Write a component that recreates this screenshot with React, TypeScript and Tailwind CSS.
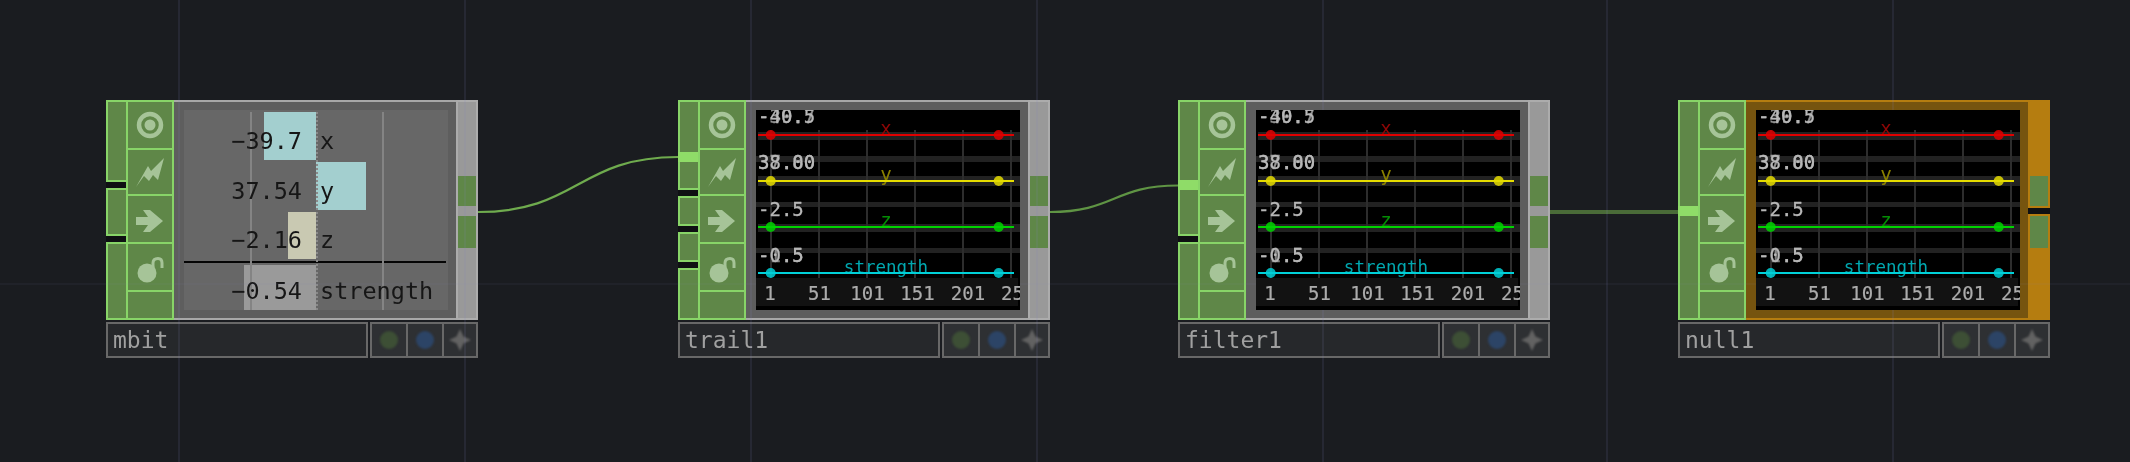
import React from "react";

const mono = "font-['DejaVu_Sans_Mono','Liberation_Mono',monospace]";

function Icons() {
  const c = "#a6c498";
  return (
    <div className="w-[48px] h-[220px] shrink-0 flex flex-col border-2 border-[#88d468] bg-[#5f8748]">
      <div className="h-[48px] border-b-2 border-[#88d468]">
        <svg className="block w-[44px] h-[46px] blur-[0.6px]" viewBox="128 102 44 46">
          <circle cx="150" cy="125" r="11" fill="none" stroke={c} strokeWidth="4.5" />
          <circle cx="150" cy="125" r="5.5" fill={c} />
        </svg>
      </div>
      <div className="h-[46px] border-b-2 border-[#88d468]">
        <svg className="block w-[44px] h-[44px] blur-[0.6px]" viewBox="128 150 44 44">
          <polygon fill={c} points="136,187 148,166 151,171 164,158 158,180 153,175 149,181 144,176" />
        </svg>
      </div>
      <div className="h-[48px] border-b-2 border-[#88d468]">
        <svg className="block w-[44px] h-[46px] blur-[0.6px]" viewBox="128 196 44 46">
          <polygon fill={c} points="136,217 148,217 143,210 150,210 163,221 150,232 143,232 148,225 136,225" />
        </svg>
      </div>
      <div className="h-[48px] border-b-2 border-[#88d468]">
        <svg className="block w-[44px] h-[46px] blur-[0.6px]" viewBox="128 244 44 46">
          <circle cx="147" cy="273" r="9.5" fill={c} />
          <path d="M153 268 V263 Q153 258.5 158 258.5 Q162 258.5 162 263 V268" fill="none" stroke={c} strokeWidth="3" />
        </svg>
      </div>
      <div className="flex-1" />
    </div>
  );
}

function Inputs({ boxes, hot }: { boxes: string[]; hot?: React.ReactNode }) {
  return (
    <div className="w-[20px] h-[220px] shrink-0 flex flex-col gap-[6px] bg-[#0f1013]">
      {boxes.map((b, i) => (
        <div key={i} className={`${b} relative border-l-2 border-t-2 border-b-2 border-[#88d468] bg-[#5f8748]`}>
          {i === 0 ? hot : null}
        </div>
      ))}
    </div>
  );
}

function Plot() {
  const labels: [string, string, number][] = [
    ["x", "#8f0606", 25],
    ["y", "#8a8000", 71],
    ["z", "#048c04", 117],
  ];
  const series: [number, string][] = [
    [24, "#e00000"],
    [70, "#e6dc00"],
    [116, "#00d400"],
    [162, "#00d0d8"],
  ];
  return (
    <svg className="relative z-20 block w-[264px] h-[200px] bg-black" viewBox="0 0 264 200">
      <g fill="#222222">
        <rect x="2" y="22" width="262" height="8" />
        <rect x="0" y="46" width="264" height="6" />
        <rect x="2" y="66" width="262" height="10" />
        <rect x="0" y="92" width="264" height="5" />
        <rect x="2" y="114" width="262" height="8" />
        <rect x="0" y="138" width="264" height="5" />
      </g>
      <g fill="#2d2d2d">
        <rect x="14" y="20" width="2" height="148" />
        <rect x="62" y="20" width="2" height="148" />
        <rect x="110" y="20" width="2" height="148" />
        <rect x="158" y="20" width="2" height="148" />
        <rect x="206" y="20" width="2" height="148" />
        <rect x="254" y="20" width="2" height="148" />
      </g>
      <rect x="0" y="168" width="262" height="28" fill="#121212" />
      <g className={`${mono} blur-[0.4px]`} fontSize="19" fill="#b8b8b8" stroke="#b8b8b8" strokeWidth="0.3">
        <text x="2" y="13">-40.5</text>
        <text x="2" y="13" opacity="0.8">-39.7</text>
        <text x="2" y="59">38.00</text>
        <text x="2" y="59" opacity="0.8">37.80</text>
        <text x="2" y="106">-2.5</text>
        <text x="2" y="152">-0.5</text>
        <text x="2" y="152" opacity="0.7">-1.5</text>
      </g>
      <g className={`${mono} blur-[0.4px]`} fontSize="19" textAnchor="middle">
        {labels.map(([t, f, y]) => (
          <text key={t} x="130" y={y} fill={f}>{t}</text>
        ))}
        <text x="130" y="163" fill="#00a8b0" fontSize="17.5">strength</text>
      </g>
      <g className={`${mono} blur-[0.4px]`} fontSize="19" fill="#acacac" stroke="#acacac" strokeWidth="0.2" textAnchor="middle">
        <text x="14" y="190">1</text>
        <text x="63.5" y="190">51</text>
        <text x="111.5" y="190">101</text>
        <text x="161.5" y="190">151</text>
        <text x="212" y="190">201</text>
        <text x="245" y="190" textAnchor="start">251</text>
      </g>
      {series.map(([y, f]) => (
        <g key={y} fill={f}>
          <rect x="2" y={y} width="256" height="2" />
          <circle cx="14.7" cy={y + 1} r="5" opacity="0.85" className="blur-[0.5px]" />
          <circle cx="242.7" cy={y + 1} r="5" opacity="0.85" className="blur-[0.5px]" />
        </g>
      ))}
    </svg>
  );
}

function Row({
  bar,
  rowH,
  rightBar,
  value,
  name,
}: {
  bar?: string;
  rowH: string;
  rightBar?: boolean;
  value: string;
  name: string;
}) {
  return (
    <div className={`${rowH} flex`}>
      <div className="relative w-[132px] flex justify-end items-end pr-[14px] pb-[7px]">
        {bar ? <div className={`absolute inset-y-0 right-0 ${bar}`} /> : null}
        <span className="relative z-10 leading-[24px]">{value}</span>
      </div>
      <div className="relative flex-1 flex items-end pl-[4px] pb-[7px]">
        {rightBar ? <div className="absolute inset-y-0 left-0 w-[50px] bg-[#a3cfcf]" /> : null}
        <span className="relative z-10 leading-[24px]">{name}</span>
      </div>
    </div>
  );
}

function Bars() {
  return (
    <div className={`relative w-[264px] h-[200px] bg-[#676767] text-[23.5px] text-[#161616] ${mono}`}>
      <div className="relative h-full flex flex-col pt-[2px] gap-[2px] blur-[0.3px]">
        <Row rowH="h-[48px]" bar="w-[52px] bg-[#a3cfcf]" value="−39.7" name="x" />
        <Row rowH="h-[48px]" rightBar value="37.54" name="y" />
        <Row rowH="h-[48px]" bar="w-[28px] bg-[#c9c9b2]" value="−2.16" name="z" />
        <div className="h-[2px] w-[262px] bg-[#050505]" />
        <Row rowH="h-[45px]" bar="w-[72px] bg-[#9a9a9a]" value="−0.54" name="strength" />
        <div className="absolute top-[2px] bottom-0 left-[66px] w-[2px] bg-[#848484]" />
        <div className="absolute top-[2px] bottom-0 left-[198px] w-[2px] bg-[#848484]" />
        <div className="absolute top-[2px] bottom-0 left-[132px] w-0 border-l-2 border-dotted border-[#8a8a8a]" />
      </div>
    </div>
  );
}

function NameRow({ name }: { name: string }) {
  return (
    <div className="flex h-[36px] mt-[2px]">
      <div className={`w-[262px] border-2 border-[#686868] bg-[#26282b] pl-[5px] text-[23px] leading-[32px] text-[#a0a0a0] blur-[0.3px] ${mono}`}>
        {name}
      </div>
      <div className="ml-[2px] w-[108px] flex border-2 border-[#686868] bg-[#2e3033]">
        <div className="w-[36px] flex items-center justify-center border-r-2 border-[#686868]">
          <div className="w-[18px] h-[18px] rounded-full bg-[#3d4f35] blur-[1px]" />
        </div>
        <div className="w-[36px] flex items-center justify-center border-r-2 border-[#686868]">
          <div className="w-[18px] h-[18px] rounded-full bg-[#2c4466] blur-[1px]" />
        </div>
        <div className="flex-1 flex items-center justify-center">
          <svg className="w-[22px] h-[22px] blur-[1px]" viewBox="0 0 22 22">
            <polygon fill="#626262" points="11,0 14.5,7.5 22,11 14.5,14.5 11,22 7.5,14.5 0,11 7.5,7.5" />
          </svg>
        </div>
      </div>
    </div>
  );
}

function Outputs() {
  return (
    <div className="w-[22px] h-[220px] shrink-0 border-2 border-[#acacac] bg-[#999999] pt-[74px] flex flex-col">
      <div className="h-[30px] bg-[#5f8748]" />
      <div className="h-[32px] mt-[10px] bg-[#5f8748]" />
    </div>
  );
}

function OutputsOrange() {
  return (
    <div className="w-[22px] h-[220px] shrink-0 flex flex-col bg-[#0f1013]">
      <div className="h-[108px] border-2 border-[#b57d10] bg-[#b57d10] pt-[74px]">
        <div className="h-[30px] bg-[#5f8748]" />
      </div>
      <div className="h-[106px] mt-[6px] border-2 border-[#b57d10] bg-[#b57d10]">
        <div className="h-[32px] bg-[#5f8748]" />
      </div>
    </div>
  );
}

function Node({
  pos,
  name,
  boxes,
  hot,
  orange,
  bars,
}: {
  pos: string;
  name: string;
  boxes: string[];
  hot?: React.ReactNode;
  orange?: boolean;
  bars?: boolean;
}) {
  return (
    <div className={`absolute top-[100px] w-[372px] ${pos}`}>
      <div className="flex h-[220px]">
        <Inputs boxes={boxes} hot={hot} />
        <Icons />
        <div
          className={`w-[282px] h-[220px] border-y-2 pt-[8px] pl-[10px] ${
            orange ? "border-[#b57d10] bg-[#76540f]" : "border-[#a8a8a8] bg-[#5e5e5e]"
          }`}
        >
          {bars ? <Bars /> : <Plot />}
        </div>
        {orange ? <OutputsOrange /> : <Outputs />}
      </div>
      <NameRow name={name} />
    </div>
  );
}

export default function App() {
  const hotBar = "absolute -left-[2px] right-0 h-[10px] bg-[#8fdc68]";
  return (
    <div className="relative w-[2130px] h-[462px] overflow-hidden bg-[#1a1c20]">
      <svg className="absolute inset-0 w-[2130px] h-[462px]" viewBox="0 0 2130 462">
        <path d="M478 212 C578 212 578 157 678 157" fill="none" stroke="#6fab4e" strokeWidth="2.2" />
        <path d="M1050 212 C1114 212 1114 185.5 1178 185.5" fill="none" stroke="#5f9444" strokeWidth="2.2" />
        <rect x="1550" y="210" width="128" height="4" fill="#4a6b38" />
      </svg>

      <Node pos="left-[106px]" name="mbit" bars boxes={["h-[82px]", "h-[48px]", "h-[78px]"]} />
      <Node
        pos="left-[678px]"
        name="trail1"
        boxes={["h-[90px]", "h-[30px]", "h-[30px]", "h-[52px]"]}
        hot={<div className={`${hotBar} top-[50px]`} />}
      />
      <Node
        pos="left-[1178px]"
        name="filter1"
        boxes={["h-[136px]", "h-[78px]"]}
        hot={<div className={`${hotBar} top-[78px]`} />}
      />
      <Node
        pos="left-[1678px]"
        name="null1"
        orange
        boxes={["h-[220px]"]}
        hot={<div className={`${hotBar} top-[104px]`} />}
      />

      <div className="absolute z-10 inset-y-0 left-[178px] w-[2px] bg-[#8282be]/12" />
      <div className="absolute z-10 inset-y-0 left-[464px] w-[2px] bg-[#8282be]/12" />
      <div className="absolute z-10 inset-y-0 left-[750px] w-[2px] bg-[#8282be]/12" />
      <div className="absolute z-10 inset-y-0 left-[1036px] w-[2px] bg-[#8282be]/12" />
      <div className="absolute z-10 inset-y-0 left-[1322px] w-[2px] bg-[#8282be]/12" />
      <div className="absolute z-10 inset-y-0 left-[1606px] w-[2px] bg-[#8282be]/12" />
      <div className="absolute z-10 inset-y-0 left-[1892px] w-[2px] bg-[#8282be]/12" />
      <div className="absolute z-10 inset-x-0 top-[283px] h-[2px] bg-[#8282be]/6" />
    </div>
  );
}
